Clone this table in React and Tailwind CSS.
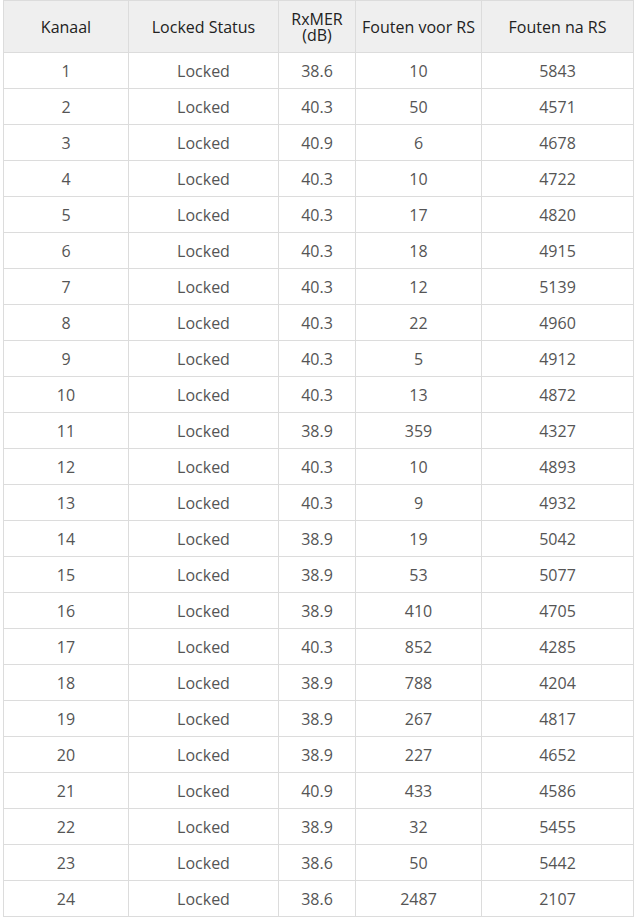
import React from "react";

const rows = [
  [1, "38.6", 10, 5843],
  [2, "40.3", 50, 4571],
  [3, "40.9", 6, 4678],
  [4, "40.3", 10, 4722],
  [5, "40.3", 17, 4820],
  [6, "40.3", 18, 4915],
  [7, "40.3", 12, 5139],
  [8, "40.3", 22, 4960],
  [9, "40.3", 5, 4912],
  [10, "40.3", 13, 4872],
  [11, "38.9", 359, 4327],
  [12, "40.3", 10, 4893],
  [13, "40.3", 9, 4932],
  [14, "38.9", 19, 5042],
  [15, "38.9", 53, 5077],
  [16, "38.9", 410, 4705],
  [17, "40.3", 852, 4285],
  [18, "38.9", 788, 4204],
  [19, "38.9", 267, 4817],
  [20, "38.9", 227, 4652],
  [21, "40.9", 433, 4586],
  [22, "38.9", 32, 5455],
  [23, "38.6", 50, 5442],
  [24, "38.6", 2487, 2107],
];

export default function App() {
  return (
    <div className="bg-white w-[640px] h-[924px] pl-[3px]" style={{ fontFamily: '"Open Sans", "Liberation Sans", sans-serif' }}>
      <table className="table-fixed border-collapse w-[630px] text-[16px] text-center">
        <colgroup>
          <col className="w-[125px]" />
          <col className="w-[150px]" />
          <col className="w-[77px]" />
          <col className="w-[126px]" />
          <col className="w-[152px]" />
        </colgroup>
        <thead>
          <tr className="bg-[#efefef] text-[#222] h-[52px]">
            <th className="border border-[#dcdcdc] font-normal leading-[16px] p-0">Kanaal</th>
            <th className="border border-[#dcdcdc] font-normal leading-[16px] p-0">Locked Status</th>
            <th className="border border-[#dcdcdc] font-normal leading-[16px] p-0">RxMER<br />(dB)</th>
            <th className="border border-[#dcdcdc] font-normal leading-[16px] p-0">Fouten voor RS</th>
            <th className="border border-[#dcdcdc] font-normal leading-[16px] p-0">Fouten na RS</th>
          </tr>
        </thead>
        <tbody className="text-[#555]">
          {rows.map(([k, mer, a, b]) => (
            <tr key={k} className="h-[36px]">
              <td className="border border-[#dcdcdc] p-0">{k}</td>
              <td className="border border-[#dcdcdc] p-0">Locked</td>
              <td className="border border-[#dcdcdc] p-0">{mer}</td>
              <td className="border border-[#dcdcdc] p-0">{a}</td>
              <td className="border border-[#dcdcdc] p-0">{b}</td>
            </tr>
          ))}
        </tbody>
      </table>
    </div>
  );
}
